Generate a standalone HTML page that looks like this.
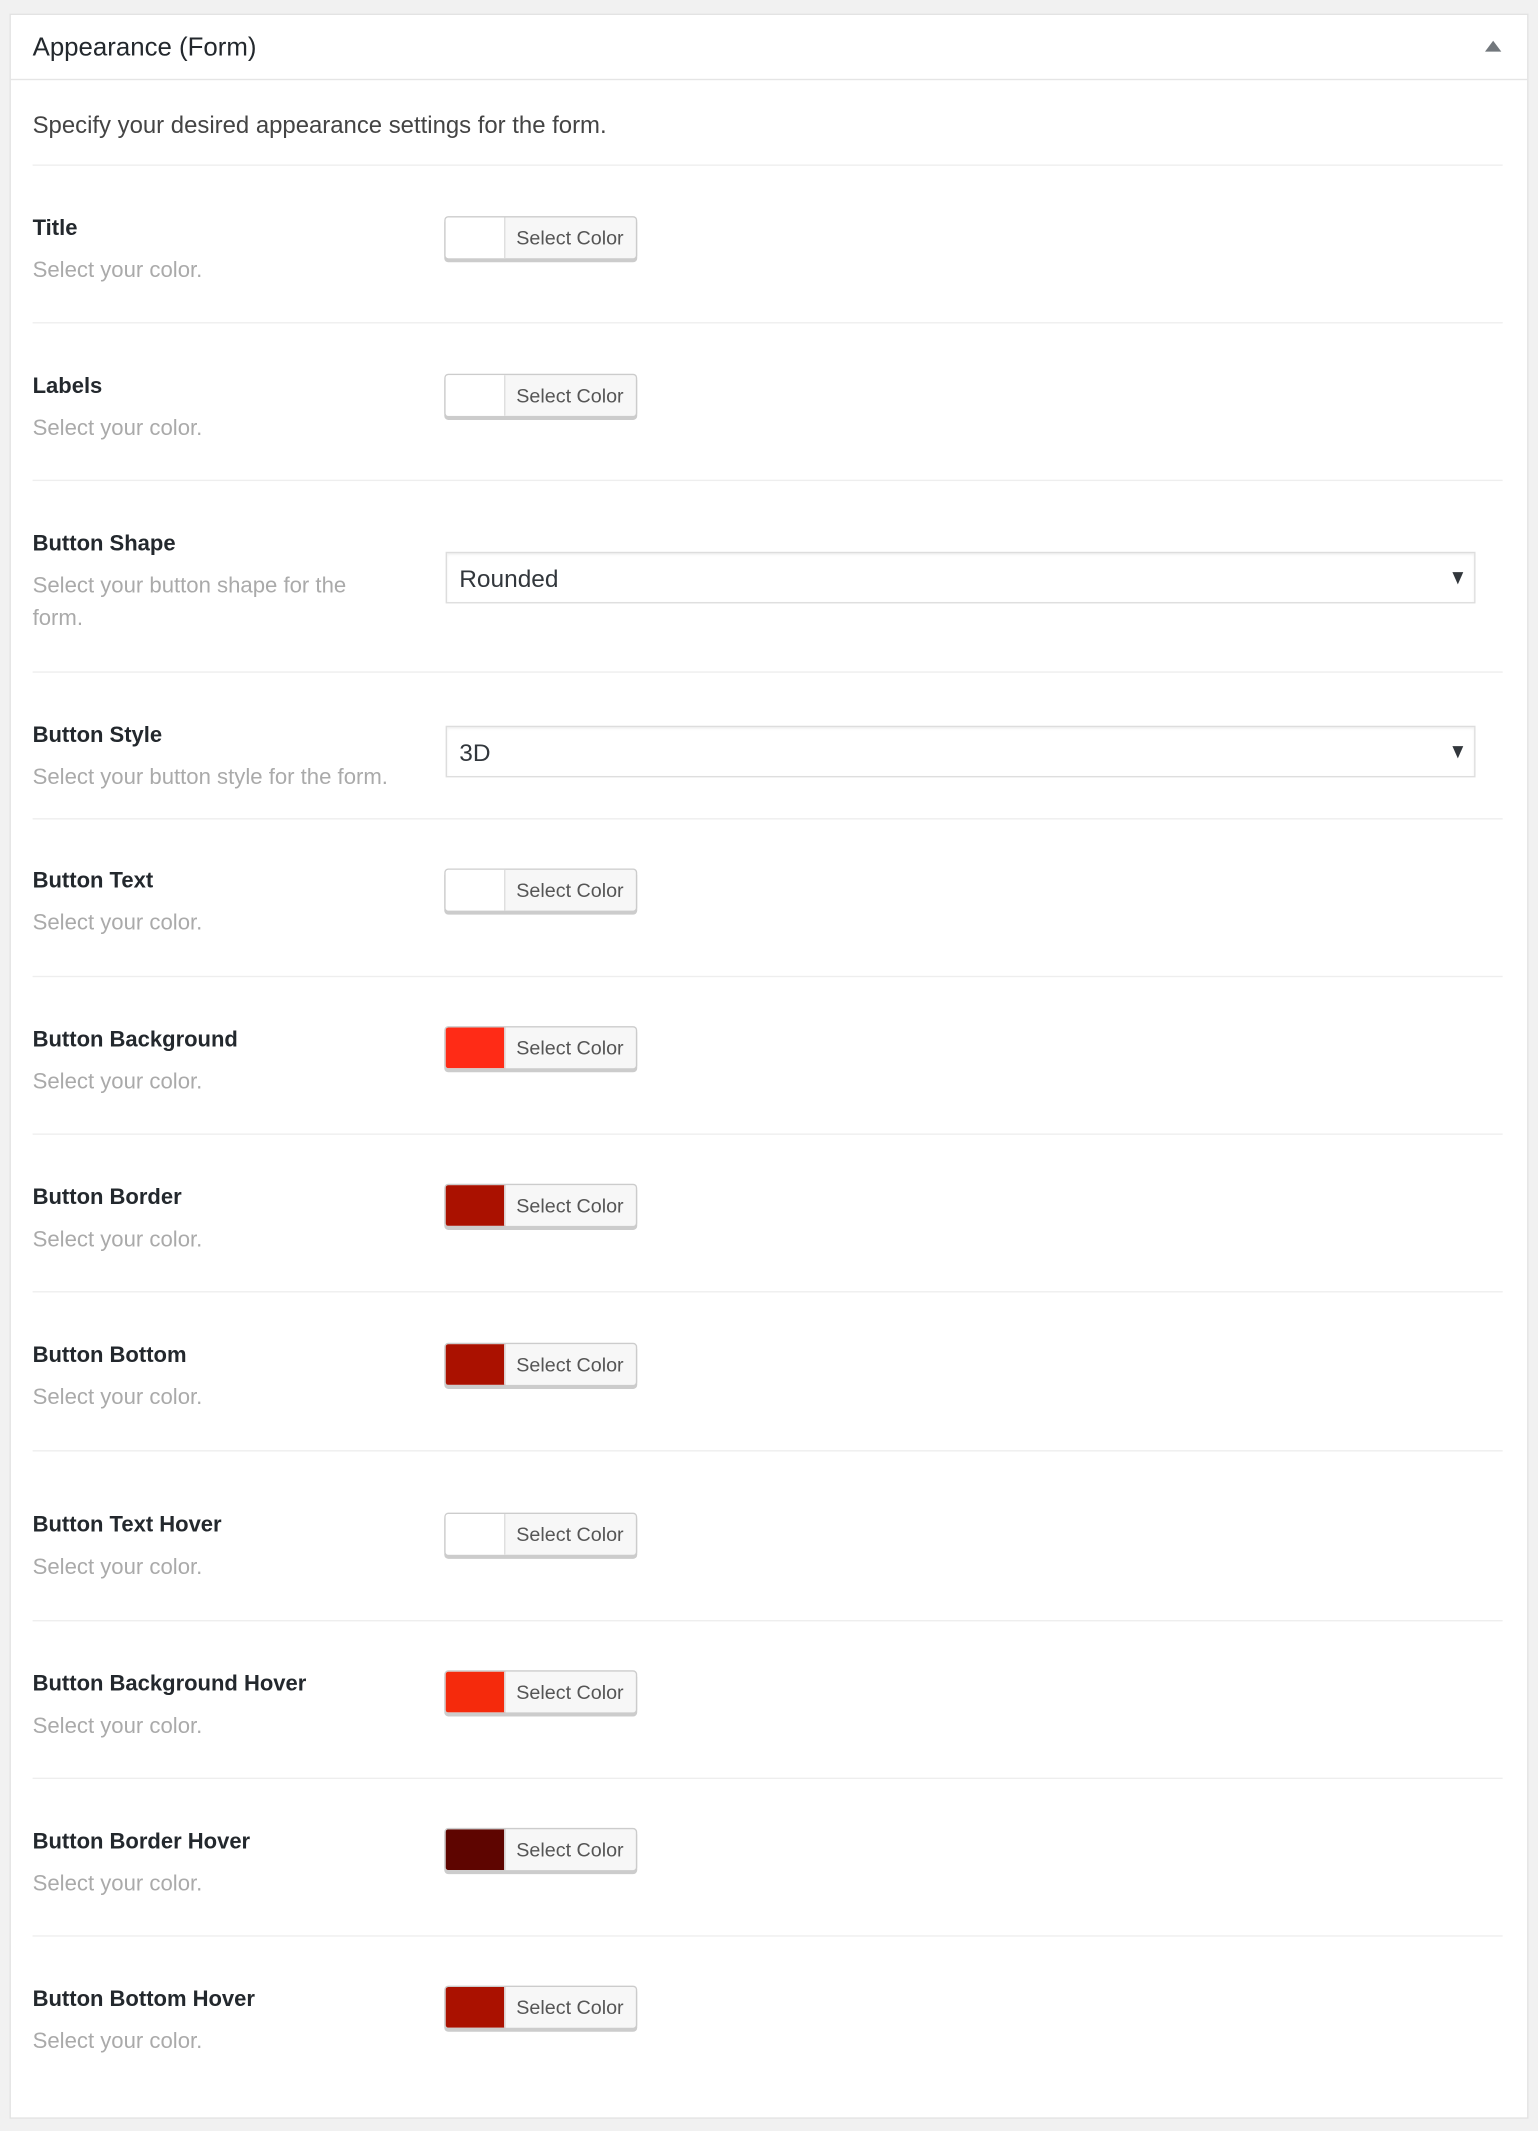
<!DOCTYPE html>
<html><head><meta charset="utf-8"><style>
html,body{margin:0;padding:0;background:#f1f1f1;overflow:hidden;width:1538px;height:2131px}
#w{position:absolute;left:0;top:0;width:1132px;height:1568px;transform:scale(1.35866,1.35906);transform-origin:0 0;font-family:"Liberation Sans",Arial,sans-serif}
.panel{position:absolute;left:7px;top:10px;width:1116px;height:1547px;background:#fff;border:1px solid #e2e2e2}
.desc0{position:absolute;left:24px;top:82px;font-size:17.6px;color:#444}
.ln{position:absolute;left:24px;width:1082px;height:1px;background:#eee}
.lb{position:absolute;left:24px;font-size:16.2px;font-weight:bold;color:#23282d;margin-top:2px}
.ds{position:absolute;left:24px;font-size:16.3px;color:#aaa;line-height:24px;margin-top:2px}
.btn{position:absolute;left:327px;width:140px;height:30px;border:1px solid #ccc;border-radius:3px;background:#f7f7f7;box-shadow:0 2px 0 #ccc;overflow:hidden}
.sw{position:absolute;left:0;top:0;width:43px;height:30px;border-right:1px solid #ddd}
.bt{position:absolute;left:52px;top:8px;font-size:14.5px;color:#555}
.sel{position:absolute;left:328px;width:756px;height:36px;border:1px solid #ddd;box-shadow:inset 0 1px 2px rgba(0,0,0,.07);background:#fff}
.sel span{position:absolute;left:9px;top:9px;font-size:18px;color:#32373c}
.sel i{position:absolute;right:8px;top:14px;width:0;height:0;border-left:4px solid transparent;border-right:4px solid transparent;border-top:9px solid #32373c}
</style></head><body><div id="w">
<div class="panel"></div>
<div style="position:absolute;left:8px;top:11px;width:1116px;height:47px;border-bottom:1px solid #e5e5e5"></div>
<div style="position:absolute;left:24px;top:25px;font-size:19px;color:#23282d">Appearance (Form)</div>
<div style="position:absolute;left:1093px;top:30px;width:0;height:0;border-left:6px solid transparent;border-right:6px solid transparent;border-bottom:8px solid #72777c"></div>
<div class="desc0">Specify your desired appearance settings for the form.</div>

<div class="ln" style="top:121px"></div>
<div class="lb" style="top:157px">Title</div><div class="ds" style="top:185px">Select your color.</div>
<div class="btn" style="top:159px"><div class="sw" style="background:#fff"></div><div class="bt">Select Color</div></div>

<div class="ln" style="top:237px"></div>
<div class="lb" style="top:273px">Labels</div><div class="ds" style="top:301px">Select your color.</div>
<div class="btn" style="top:275px"><div class="sw" style="background:#fff"></div><div class="bt">Select Color</div></div>

<div class="ln" style="top:353px"></div>
<div class="lb" style="top:389px">Button Shape</div><div class="ds" style="top:417px">Select your button shape for the<br>form.</div>
<div class="sel" style="top:406px"><span>Rounded</span><i></i></div>

<div class="ln" style="top:494px"></div>
<div class="lb" style="top:530px">Button Style</div><div class="ds" style="top:558px">Select your button style for the form.</div>
<div class="sel" style="top:534px"><span>3D</span><i></i></div>

<div class="ln" style="top:602px"></div>
<div class="lb" style="top:637px">Button Text</div><div class="ds" style="top:665px">Select your color.</div>
<div class="btn" style="top:639px"><div class="sw" style="background:#fff"></div><div class="bt">Select Color</div></div>

<div class="ln" style="top:718px"></div>
<div class="lb" style="top:754px">Button Background</div><div class="ds" style="top:782px">Select your color.</div>
<div class="btn" style="top:755px"><div class="sw" style="background:#ff2b16"></div><div class="bt">Select Color</div></div>

<div class="ln" style="top:834px"></div>
<div class="lb" style="top:870px">Button Border</div><div class="ds" style="top:898px">Select your color.</div>
<div class="btn" style="top:871px"><div class="sw" style="background:#aa1100"></div><div class="bt">Select Color</div></div>

<div class="ln" style="top:950px"></div>
<div class="lb" style="top:986px">Button Bottom</div><div class="ds" style="top:1014px">Select your color.</div>
<div class="btn" style="top:988px"><div class="sw" style="background:#aa1100"></div><div class="bt">Select Color</div></div>

<div class="ln" style="top:1067px"></div>
<div class="lb" style="top:1111px">Button Text Hover</div><div class="ds" style="top:1139px">Select your color.</div>
<div class="btn" style="top:1113px"><div class="sw" style="background:#fff"></div><div class="bt">Select Color</div></div>

<div class="ln" style="top:1192px"></div>
<div class="lb" style="top:1228px">Button Background Hover</div><div class="ds" style="top:1256px">Select your color.</div>
<div class="btn" style="top:1229px"><div class="sw" style="background:#f52a0c"></div><div class="bt">Select Color</div></div>

<div class="ln" style="top:1308px"></div>
<div class="lb" style="top:1344px">Button Border Hover</div><div class="ds" style="top:1372px">Select your color.</div>
<div class="btn" style="top:1345px"><div class="sw" style="background:#5e0500"></div><div class="bt">Select Color</div></div>

<div class="ln" style="top:1424px"></div>
<div class="lb" style="top:1460px">Button Bottom Hover</div><div class="ds" style="top:1488px">Select your color.</div>
<div class="btn" style="top:1461px"><div class="sw" style="background:#aa1100"></div><div class="bt">Select Color</div></div>
</div></body></html>
